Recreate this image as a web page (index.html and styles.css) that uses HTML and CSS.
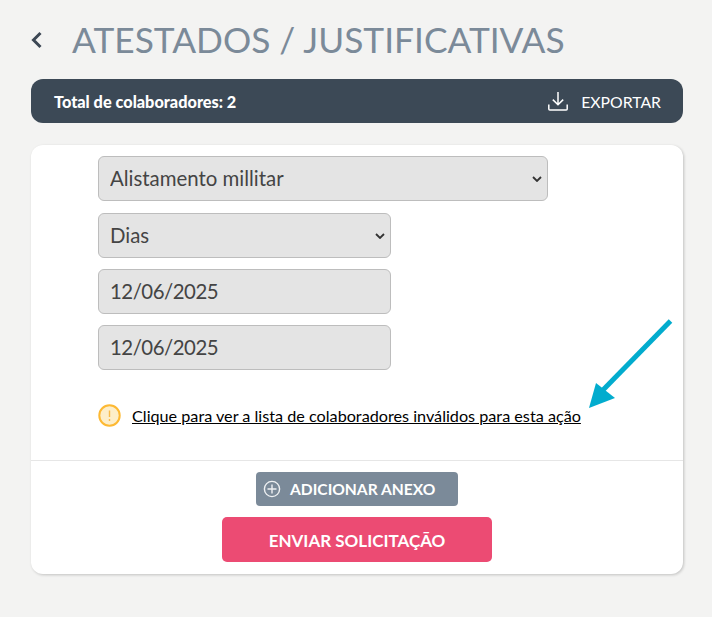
FILE: index.html
```html
<!DOCTYPE html>
<html lang="pt-BR">
<head>
<meta charset="utf-8">
<title>Atestados / Justificativas</title>
<link rel="stylesheet" href="styles.css">
</head>
<body>
<main class="page">
  <header class="title-row">
    <svg class="back" width="11" height="18" viewBox="0 0 11 18"><path d="M9.5 2 L2.5 9 L9.5 16" fill="none" stroke="#3c4754" stroke-width="3"/></svg>
    <h1 class="title">ATESTADOS / JUSTIFICATIVAS</h1>
  </header>
  <div class="bar">
    <span class="total">Total de colaboradores: 2</span>
    <span class="export">
      <svg width="20" height="20" viewBox="0 0 20 20" fill="none" stroke="#fff" stroke-width="1.5"><path d="M10 1 V13.5 M4.8 8.6 L10 13.8 L15.2 8.6"/><path d="M.8 13.5 V18 Q.8 19 1.8 19 H18.2 Q19.2 19 19.2 18 V13.5"/></svg>
      EXPORTAR
    </span>
  </div>
  <section class="card">
    <div class="fields">
      <select class="control picker wide"><option>Alistamento millitar</option></select>
      <select class="control picker narrow"><option>Dias</option></select>
      <input class="control narrow" value="12/06/2025" readonly>
      <input class="control narrow" value="12/06/2025" readonly>
      <div class="warning">
        <svg width="23" height="23" viewBox="0 0 23 23"><circle cx="11.5" cy="11.5" r="10.2" fill="#fdeec9" stroke="#fdb933" stroke-width="2"/><path d="M11.5 6.5 V13 M11.5 15 V17" stroke="#f8bb4a" stroke-width="1.4" fill="none"/></svg>
        <a class="warning-link" href="#">Clique para ver a lista de colaboradores inválidos para esta ação</a>
      </div>
    </div>
    <div class="actions">
      <button class="btn-attach" type="button">
        <svg width="18" height="18" viewBox="0 0 18 18" fill="none" stroke="#eef0f2" stroke-width="1.4"><circle cx="9" cy="9" r="7.6"/><path d="M9 4.5 V13.5 M4.5 9 H13.5"/></svg>
        ADICIONAR ANEXO
      </button>
      <button class="btn-send" type="button">ENVIAR SOLICITAÇÃO</button>
    </div>
    <svg class="arrow" width="84" height="94" viewBox="0 0 84 94"><path d="M81.5 3 L14 72" stroke="#02acce" stroke-width="5" fill="none"/><path d="M0 90 L7 65 L26 80 Z" fill="#02acce"/></svg>
  </section>
</main>
</body>
</html>
```

FILE: styles.css
```css
* { box-sizing: border-box; }
html, body { margin: 0; padding: 0; }
body {
  background: #f3f3f2;
  font-family: "Lato", sans-serif;
  height: 617px;
  overflow: hidden;
}
.page { padding: 0 29px 0 31px; }
.title-row {
  display: flex;
  align-items: center;
  gap: 30px;
  height: 79px;
}
.title {
  margin: 0;
  font-size: 35.3px;
  font-weight: 400;
  color: #7b8a99;
  white-space: nowrap;
}
.bar {
  display: flex;
  align-items: center;
  justify-content: space-between;
  height: 44px;
  padding: 0 22px 0 23px;
  background: #3c4956;
  border-radius: 12px;
  color: #fff;
}
.total { font-size: 16.3px; font-weight: 900; }
.export { display: flex; align-items: center; gap: 13px; font-size: 15.8px; }
.card {
  position: relative;
  margin-top: 22px;
  height: 429px;
  background: #fff;
  border-radius: 12px;
  box-shadow: 1px 1px 3px rgba(0,0,0,.2);
}
.fields {
  display: flex;
  flex-direction: column;
  align-items: flex-start;
  gap: 11px;
  height: 316px;
  padding: 11px 0 0 67px;
  border-bottom: 1px solid #e6e6e6;
}
.control {
  height: 45px;
  margin: 0;
  padding: 0 6px 2px 11px;
  background-color: #e4e4e4;
  border: 1px solid #bdbdbd;
  border-radius: 6px;
  font-family: "Lato", sans-serif;
  font-size: 20.4px;
  color: #444;
}
.picker {
  appearance: none;
  background-image: url("data:image/svg+xml,%3Csvg xmlns='http://www.w3.org/2000/svg' width='10' height='6' viewBox='0 0 10 6'%3E%3Cpath d='M1 1 L5 5 L9 1' fill='none' stroke='%23333' stroke-width='1.8'/%3E%3C/svg%3E");
  background-repeat: no-repeat;
  background-position: right 5px center;
}
input.control { letter-spacing: -.5px; }
.wide { width: 450px; margin-bottom: 1px; }
.narrow { width: 293px; }
.warning {
  display: flex;
  align-items: center;
  gap: 11px;
  margin-top: 23px;
}
.warning-link { color: #000; font-size: 16.2px; }
.actions {
  display: flex;
  flex-direction: column;
  align-items: center;
  gap: 11px;
  padding-top: 11px;
}
.btn-attach {
  display: flex;
  align-items: center;
  gap: 9px;
  width: 202px;
  height: 34px;
  padding: 0 0 0 7px;
  background: #7b8a99;
  border: 0;
  border-radius: 4px;
  color: #fff;
  font-family: "Lato", sans-serif;
  font-size: 15.6px;
  font-weight: 700;
}
.btn-send {
  width: 270px;
  height: 45px;
  padding: 2px 0 0;
  background: #ec4b73;
  border: 0;
  border-radius: 5px;
  color: #fff;
  font-family: "Lato", sans-serif;
  font-size: 17px;
  font-weight: 700;
}
.arrow { position: absolute; left: 558px; top: 173px; }
```
